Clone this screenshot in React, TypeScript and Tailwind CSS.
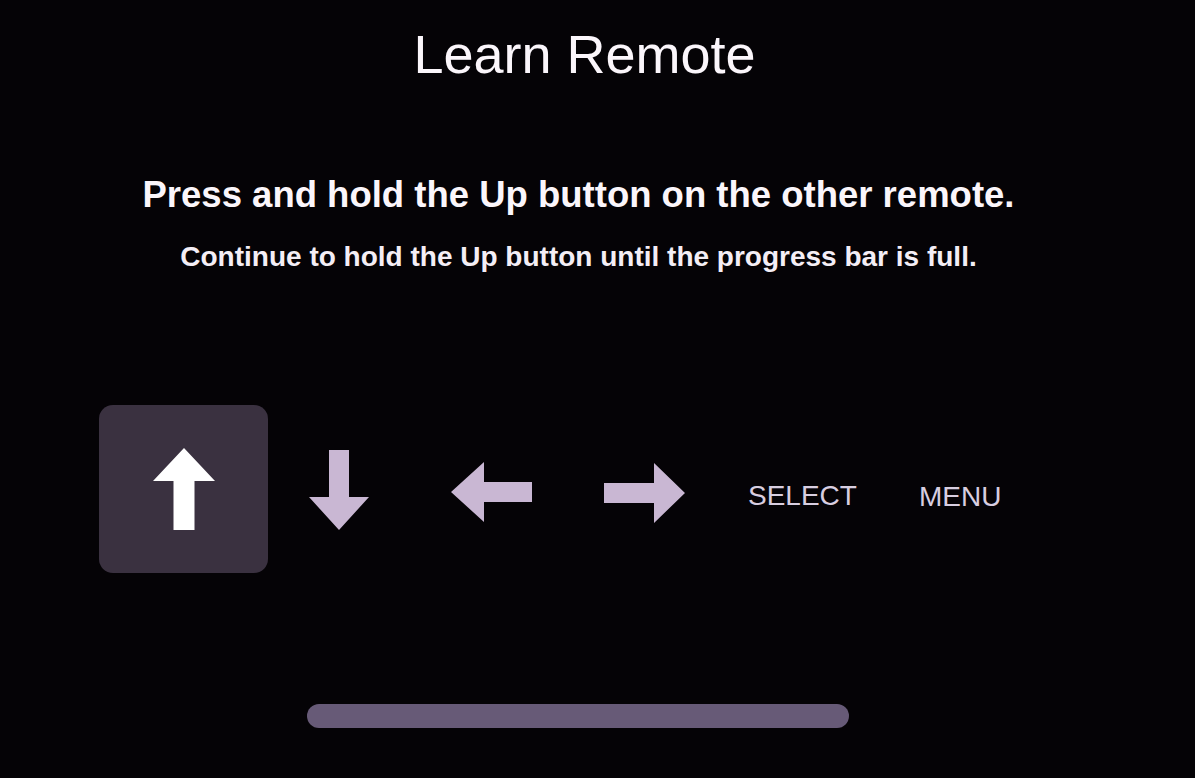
import React from "react";

type Dir = "up" | "down" | "left" | "right";

// Block arrows used on the learn-remote button row
const Arrow: React.FC<{ dir: Dir; className?: string }> = ({ dir, className }) => {
  if (dir === "up" || dir === "down") {
    const pts =
      dir === "up"
        ? "31,0 62,33 41.5,33 41.5,82 20.5,82 20.5,33 0,33"
        : "20,0 40,0 40,47 60,47 30,80 0,47 20,47";
    const w = dir === "up" ? 62 : 60;
    const h = dir === "up" ? 82 : 80;
    return (
      <svg width={w} height={h} viewBox={`0 0 ${w} ${h}`} className={className}>
        <polygon points={pts} fill="currentColor" />
      </svg>
    );
  }
  const pts =
    dir === "right"
      ? "0,20 50,20 50,0 81,30 50,60 50,40 0,40"
      : "81,20 33,20 33,0 0,30 33,60 33,40 81,40";
  return (
    <svg width={81} height={60} viewBox="0 0 81 60" className={className}>
      <polygon points={pts} fill="currentColor" />
    </svg>
  );
};

const App: React.FC = () => {
  return (
    <div
      className="w-[1195px] h-[778px] bg-[#050306] text-[#fbf6fb] overflow-hidden flex flex-col"
      style={{ fontFamily: '"Liberation Sans", Arial, sans-serif' }}
    >
      {/* Heading and instructions */}
      <div className="flex flex-col items-center pr-[38px]">
        <h1 className="mt-[27px] ml-[12px] text-[54px] leading-none font-normal">Learn Remote</h1>
        <p className="mt-[96px] text-[36.5px] leading-none font-bold">
          Press and hold the Up button on the other remote.
        </p>
        <p className="mt-[29px] text-[28px] leading-none font-bold text-[#f4eef5]">
          Continue to hold the Up button until the progress bar is full.
        </p>
      </div>

      {/* Button row */}
      <div className="mt-[134px] flex items-center text-[#c9b7d3]">
        <div className="ml-[99px] w-[169px] h-[168px] rounded-[14px] bg-[#3a3140] flex items-center justify-center">
          <Arrow dir="up" className="text-white" />
        </div>
        <Arrow dir="down" className="ml-[41px] mt-[2px]" />
        <Arrow dir="left" className="ml-[82px] mt-[6px]" />
        <Arrow dir="right" className="ml-[72px] mt-[8px]" />
        <span className="ml-[63px] mt-[14px] text-[28px] leading-none text-[#d8cee0]">SELECT</span>
        <span className="ml-[62px] mt-[16px] text-[28px] leading-none text-[#d8cee0]">MENU</span>
      </div>

      {/* Progress bar */}
      <div className="mt-[131px] ml-[307px] w-[542px] h-[24px] rounded-full bg-[#675a77]" />
    </div>
  );
};

export default App;
